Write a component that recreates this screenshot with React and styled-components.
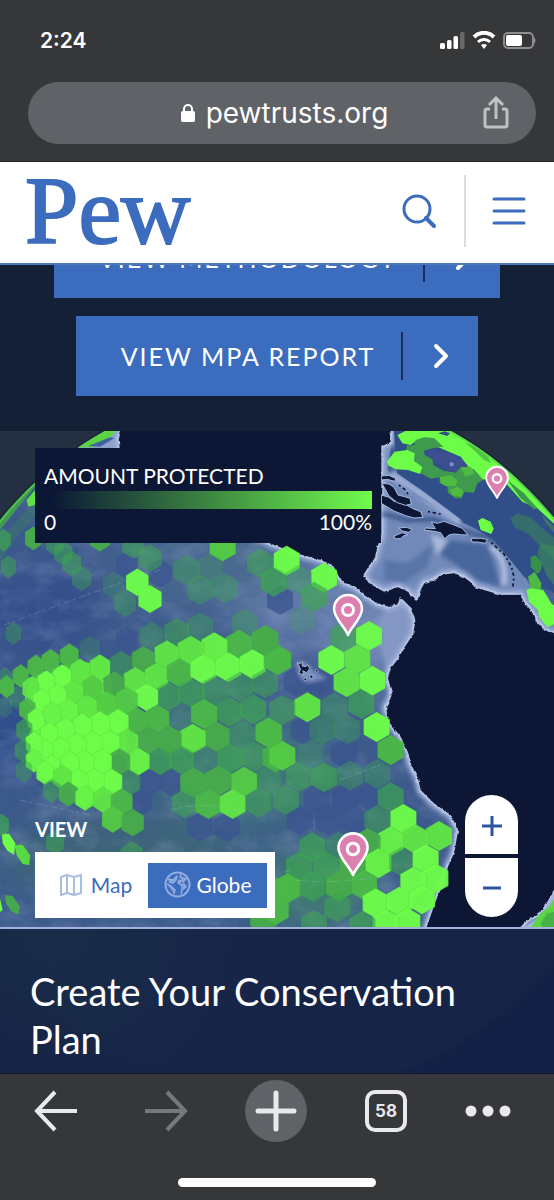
import React, { useState } from "react"
import styled, { createGlobalStyle } from "styled-components"

const GlobalStyle = createGlobalStyle`
  *, *::before, *::after {
    box-sizing: border-box;
  }
  body {
    margin: 0;
    background: #363739;
    font-family: Lato, "Open Sans", sans-serif;
  }
  button, input {
    font-family: inherit;
  }
`

const Page = styled.div`
  display: flex;
  flex-direction: column;
  min-height: 100vh;
`

const BrowserTop = styled.div`
  padding: 28px 18px 17px 28px;
  background: #363739;
  border-bottom: 1px solid #1f2022;
  font-family: Inter, sans-serif;
  color: #fff;
`

const StatusBar = styled.div`
  display: flex;
  align-items: center;
  justify-content: space-between;
  height: 26px;
  margin-bottom: 28px;
  padding-left: 12px;
`

const Time = styled.span`
  font-size: 21px;
  font-weight: 600;
  line-height: 26px;
`

const StatusIcons = styled.div`
  display: flex;
  align-items: center;
`

const AddressBar = styled.div`
  display: grid;
  grid-template-columns: 60px 1fr 60px;
  align-items: center;
  height: 62px;
  padding: 0 10px;
  border-radius: 31px;
  background: #5f6267;
`

const Address = styled.div`
  grid-column: 2;
  display: flex;
  align-items: center;
  justify-content: center;
  gap: 10px;
  padding-left: 4px;
  font-size: 28px;
  line-height: 32px;
`

const IconButton = styled.button`
  display: flex;
  align-items: center;
  justify-content: center;
  padding: 0;
  border: 0;
  background: transparent;
  cursor: pointer;
`

const SiteHeader = styled.header`
  display: flex;
  align-items: center;
  height: 103px;
  padding: 0 28px 3px 25px;
  background: #fff;
  border-bottom: 2px solid #4c78bd;
`

const Logo = styled.a`
  margin-right: auto;
  color: #3c6cbe;
  font-family: "Liberation Serif", serif;
  font-size: 96px;
  line-height: 96px;
  -webkit-text-stroke: 2px #3c6cbe;
  text-decoration: none;
`

const HeaderDivider = styled.div`
  width: 2px;
  height: 72px;
  margin: 0 26px 0 27px;
  background: #dddddf;
`

const Reports = styled.section`
  display: flex;
  flex-direction: column;
  align-items: center;
  justify-content: flex-end;
  gap: 18px;
  height: 166px;
  padding-bottom: 35px;
  overflow: hidden;
  background: #142036;
`

const ReportLink = styled.a`
  display: flex;
  flex: none;
  align-items: center;
  height: 80px;
  padding: 0 25px 0 45px;
  background: #3c6cbe;
  color: #fff;
  font-size: 25px;
  letter-spacing: 2px;
  text-decoration: none;
`

const LinkDivider = styled.span`
  width: 2px;
  height: 48px;
  margin: 0 25px 0 26px;
  background: #1b2d58;
`

const MapArea = styled.section`
  position: relative;
  aspect-ratio: 554 / 496;
  overflow: hidden;
  background: #243042;
`

const GlobeSvg = styled.svg`
  display: block;
  width: 100%;
  height: 100%;
`

const Legend = styled.div`
  position: absolute;
  top: 17px;
  left: 35px;
  width: 346px;
  padding: 15px 9px 8px;
  background: #0b1735;
  color: #fff;
  font-size: 21px;
  line-height: 26px;
`

const LegendBar = styled.div`
  height: 18px;
  margin-top: 2px;
  background: linear-gradient(90deg, #0b1735 2%, #70fb4c);
`

const LegendRange = styled.div`
  display: flex;
  justify-content: space-between;
`

const ViewSwitch = styled.div`
  position: absolute;
  left: 35px;
  bottom: 9px;
`

const ViewLabel = styled.div`
  margin-bottom: 11px;
  color: #fff;
  font-size: 20px;
  font-weight: 700;
  line-height: 24px;
`

const ViewOptions = styled.div`
  display: flex;
  padding: 11px 8px 10px;
  background: #fff;
`

const ViewOption = styled.button`
  display: flex;
  align-items: center;
  justify-content: center;
  gap: ${(props) => (props.$wide ? "6px" : "8px")};
  width: ${(props) => (props.$wide ? "119px" : "105px")};
  height: 45px;
  padding: 0 0 2px;
  border: 0;
  background: ${(props) => (props.$active ? "#3c6cbe" : "transparent")};
  color: ${(props) => (props.$active ? "#fff" : "#3c6cbe")};
  font-size: 21px;
  cursor: pointer;
`

const ZoomControl = styled.div`
  position: absolute;
  right: 36px;
  bottom: 10px;
  display: flex;
  flex-direction: column;
  gap: 4px;
`

const ZoomButton = styled(IconButton)`
  width: 53px;
  height: 59px;
  background: #fff;
  border-radius: ${(props) => (props.$top ? "27px 27px 0 0" : "0 0 27px 27px")};
`

const PlanPanel = styled.section`
  height: 147px;
  padding: 38px 30px 0;
  border-top: 2px solid #a3b2dc;
  border-bottom: 1px solid #10182f;
  background:
    radial-gradient(circle at 10% 0, #1a2c48 0, transparent 45%),
    radial-gradient(circle 355px at 278px -186px, #162448 98%, #142046 100%);
`

const PlanTitle = styled.h2`
  margin: 0;
  color: #fff;
  font-size: 38px;
  font-weight: 400;
  line-height: 48px;
`

const BrowserBottom = styled.div`
  display: flex;
  flex-direction: column;
  align-items: center;
  background: #363739;
`

const Toolbar = styled.nav`
  display: flex;
  align-items: center;
  justify-content: space-between;
  width: 100%;
  height: 74px;
  padding: 0 43px 0 25px;
`

const ToolButton = styled(IconButton)`
  width: ${(props) => (props.$narrow ? "46px" : "62px")};
  height: 62px;
  border-radius: 50%;
  background: ${(props) => (props.$filled ? "#5f6267" : "transparent")};
`

const TabCount = styled.span`
  display: flex;
  align-items: center;
  justify-content: center;
  width: 42px;
  height: 42px;
  border: 4px solid #e8e9ec;
  border-radius: 10px;
  color: #e8e9ec;
  font-family: Inter, sans-serif;
  font-size: 17px;
  font-weight: 700;
`

const HomeIndicator = styled.div`
  width: 198px;
  height: 9px;
  margin: 30px 0 13px;
  border-radius: 5px;
  background: #fff;
`

// [x, y, level] with level going from 0 (unprotected) to 10
const WEST_CELLS = [
  [412, 457, 10], [450, 507, 10], [668, 349, 7], [530, 607, 3], [600, 592, 2], [455, 617, 2],
  [560, 420, 2], [630, 415, 1], [600, 480, 2], [675, 475, 2], [780, 400, 3], [820, 455, 3],
  [215, 400, 3], [245, 445, 2], [190, 370, 3], [100, 325, 5], [375, 520, 2], [450, 385, 3],
  [400, 345, 3], [300, 325, 5], [165, 340, 3], [25, 410, 3], [10, 330, 4], [735, 580, 2],
  [270, 655, 1], [340, 465, 1], [40, 610, 2], [15, 745, 2], [50, 802, 2], [15, 830, 1],
  [792, 637, 5], [717, 644, 6], [643, 652, 9], [572, 662, 8], [500, 674, 8], [430, 690, 5],
  [363, 703, 3], [208, 678, 6], [152, 694, 6], [108, 710, 6], [62, 738, 6], [20, 770, 6],
  [300, 712, 8], [240, 724, 8], [186, 740, 10], [138, 757, 10], [92, 775, 8],
  [405, 752, 8], [470, 740, 8], [538, 728, 6], [610, 718, 10], [685, 712, 10], [758, 703, 10],
  [342, 764, 5], [277, 775, 7], [222, 787, 8], [172, 798, 10], [124, 812, 10], [82, 838, 6],
  [830, 690, 4], [795, 760, 3], [720, 770, 3], [645, 780, 3], [575, 790, 4], [505, 798, 4],
  [440, 802, 10], [380, 812, 7], [320, 822, 7], [262, 832, 8], [206, 842, 9], [157, 852, 9],
  [108, 870, 10], [73, 900, 4],
  [760, 838, 4], [688, 845, 4], [612, 852, 6], [540, 860, 1], [472, 866, 6], [410, 873, 6],
  [354, 877, 10], [300, 882, 10], [247, 888, 10], [196, 900, 10], [147, 912, 10],
  [805, 907, 6], [727, 915, 2], [650, 920, 5], [578, 926, 8], [508, 930, 5], [442, 932, 5],
  [382, 936, 8], [328, 940, 10], [278, 942, 10], [230, 946, 10], [182, 958, 10], [135, 965, 10],
  [102, 940, 10], [68, 962, 3], [102, 992, 9],
  [827, 982, 6], [765, 980, 3], [690, 985, 4], [615, 990, 1], [545, 990, 4], [480, 993, 4],
  [415, 995, 9], [358, 995, 5], [305, 996, 10], [253, 998, 10], [210, 1000, 10], [155, 1010, 10],
  [72, 1022, 2], [135, 1028, 10],
  [805, 1050, 2], [732, 1055, 7], [655, 1052, 5], [580, 1058, 5], [388, 1058, 3], [335, 1056, 10],
  [283, 1054, 10], [236, 1056, 10], [187, 1042, 8], [155, 1082, 3], [205, 1092, 5],
  [255, 1104, 9], [310, 1110, 8], [365, 1116, 6], [553, 1120, 3], [625, 1122, 6], [698, 1122, 8],
  [775, 1118, 3], [338, 1168, 7], [398, 1178, 5], [5, 1185, 4], [165, 1238, 3], [395, 1275, 3],
  [825, 1385, 5], [790, 1465, 5],
]

const EAST_CELLS = [
  [38, 392, 10], [150, 443, 10], [120, 500, 4], [75, 450, 2], [0, 455, 2], [85, 570, 1],
  [208, 620, 4], [285, 618, 10], [172, 690, 10], [250, 688, 8], [12, 690, 6], [-26, 630, 5],
  [295, 752, 10], [218, 757, 8], [100, 832, 8], [262, 822, 4], [182, 832, 2], [25, 840, 3],
  [308, 891, 10], [350, 960, 6], [145, 900, 2], [220, 898, 2], [25, 977, 7], [-15, 910, 6],
  [110, 972, 1], [75, 1040, 3], [150, 1042, 4], [228, 1037, 2], [310, 1032, 2], [35, 1110, 3],
  [350, 1102, 4], [388, 1167, 10], [310, 1170, 3], [495, 1218, 8], [425, 1228, 8], [350, 1234, 9],
  [280, 1240, 5], [115, 1252, 4], [195, 1250, 2], [75, 1310, 4], [155, 1310, 4], [235, 1305, 5],
  [313, 1300, 9], [384, 1295, 3], [455, 1287, 10], [484, 1345, 10], [418, 1355, 10], [270, 1365, 6],
  [195, 1368, 5], [40, 1375, 6], [115, 1370, 4], [305, 1420, 10], [376, 1415, 10], [444, 1408, 10],
  [400, 1478, 10], [335, 1482, 10], [5, 1440, 6], [190, 1432, 3], [265, 1488, 4], [120, 1485, 3],
]

// cells that hold open water, darker than the sea around them
const DARK_CELLS = [
  [450, 1055], [515, 1058], [380, 405], [480, 430], [912, 900], [1032, 970], [420, 1120],
  [950, 1105], [1035, 1105], [1110, 1100], [900, 1170], [985, 1170], [1065, 1170],
  [890, 755], [960, 755], [80, 480], [130, 520], [840, 510], [380, 630], [600, 1190], [680, 1190],
]

const WEST_CLUSTER =
  "M92 742 L138 722 L186 706 L240 692 L272 700 L300 678 L330 694 L330 740 L345 820 L378 850 L380 960 L335 980 L335 1010 L360 1040 L356 1080 L315 1080 L285 1110 L255 1132 L230 1118 L225 1080 L165 1055 L140 1055 L118 1020 L82 995 L85 920 L95 885 L90 860 L100 830 L74 805Z"

const LAND =
  "M-455 -20 L345 -10 L350 35 L322 50 L322 318 L310 350 L302 385 L290 400 L268 435 L285 460 L330 485 L372 472 L402 485 L430 514 L440 480 L452 458 L480 452 L505 434 L540 430 L568 440 L588 455 L602 472 L650 486 L680 495 L738 494 L752 520 L770 540 L790 575 L812 600 L845 615 L845 1370 L825 1405 L810 1430 L790 1452 L760 1470 L730 1500 L455 1500 L476 1440 L490 1400 L510 1360 L522 1310 L540 1270 L553 1200 L530 1155 L480 1120 L440 1080 L432 1045 L410 1000 L400 960 L380 920 L348 880 L336 835 L355 792 L342 745 L350 715 L370 690 L390 655 L418 612 L424 570 L408 530 L378 500 L370 522 L345 530 L308 520 L286 504 L268 490 L240 470 L206 455 L188 425 L176 405 L140 390 L75 372 L0 345 L-80 310 L-460 75 L-466 30 Z"

const SOLID = {
  5: "#48ab4b",
  6: "#4bb848",
  7: "#53cb45",
  8: "#60e545",
  9: "#67f247",
  10: "#6dfd49",
}

const hexPoints = (cx, cy, rx, ry) =>
  [
    [0, -ry],
    [rx, -ry / 2],
    [rx, ry / 2],
    [0, ry],
    [-rx, ry / 2],
    [-rx, -ry / 2],
  ]
    .map(([x, y]) => `${cx + x},${cy + y}`)
    .join(" ")

// the cells get narrower towards the western limb
const cellWidth = (x) => (x < 560 ? 22 + (x / 560) * 16 : 39)
const cellHeight = (x) => (x < 560 ? 34 + (x / 560) * 10 : 45)

const Cell = ({ x, y, level, globalX }) => (
  <polygon
    points={hexPoints(x, y, cellWidth(globalX), cellHeight(globalX))}
    fill={SOLID[level] || "#3da650"}
    fillOpacity={level > 4 ? 0.96 : 0.12 + level * 0.14}
    stroke="#3fae45"
    strokeOpacity={level > 4 ? 0.3 : 0.05}
    strokeWidth="2"
  />
)

const Pin = ({ x, y, scale = 1 }) => (
  <g transform={`translate(${x} ${y}) scale(${scale})`}>
    <path
      d="M0 0 C-3 -8 -14 -17 -14 -26 A14 14 0 0 1 14 -26 C14 -17 3 -8 0 0Z"
      fill="#dc81af"
      stroke="#fff"
      strokeWidth="2.5"
      strokeLinejoin="round"
    />
    <circle cx="0" cy="-25" r="5.5" fill="#dc81af" stroke="#fff" strokeWidth="3" />
  </g>
)

const Globe = () => (
  <GlobeSvg
    viewBox="0 431 554 496"
    preserveAspectRatio="xMidYMid slice"
    role="img"
    aria-label="Globe of protected ocean areas"
  >
    <defs>
      <clipPath id="sphere">
        <circle cx="278" cy="741" r="355" />
      </clipPath>
      <filter id="soft" x="-50%" y="-50%" width="200%" height="200%">
        <feGaussianBlur stdDeviation="18" />
      </filter>
      <filter id="edge" x="-10%" y="-10%" width="120%" height="120%">
        <feGaussianBlur stdDeviation="6" />
      </filter>
      <filter id="coast" x="-5%" y="-5%" width="110%" height="110%">
        <feTurbulence type="fractalNoise" baseFrequency="0.06" numOctaves="3" result="n" />
        <feDisplacementMap in="SourceGraphic" in2="n" scale="10" xChannelSelector="R" yChannelSelector="G" />
      </filter>
      <filter id="relief" x="0" y="0" width="100%" height="100%">
        <feTurbulence type="fractalNoise" baseFrequency="0.03 0.05" numOctaves="5" seed="8" />
        <feColorMatrix values="0 0 0 0 0.55  0 0 0 0 0.65  0 0 0 0 0.85  1.8 0 0 0 -0.75" />
      </filter>
    </defs>
    <circle cx="278" cy="741" r="357" fill="#1b2b33" />
    <g clipPath="url(#sphere)">
      <rect y="420" width="554" height="520" fill="#3d5a8c" />
      <g filter="url(#soft)">
        <ellipse cx="40" cy="610" rx="60" ry="50" fill="#34508c" />
        <ellipse cx="300" cy="600" rx="80" ry="50" fill="#5f78a8" />
        <ellipse cx="390" cy="640" rx="60" ry="40" fill="#7588b8" />
        <ellipse cx="200" cy="565" rx="90" ry="40" fill="#48698f" />
        <ellipse cx="240" cy="770" rx="90" ry="60" fill="#3f6f80" />
        <ellipse cx="120" cy="860" rx="120" ry="40" fill="#3c6578" />
        <ellipse cx="310" cy="890" rx="70" ry="35" fill="#3f7a72" />
        <ellipse cx="480" cy="520" rx="60" ry="35" fill="#2d4a82" />
        <ellipse cx="10" cy="730" rx="20" ry="50" fill="#2c4a8c" />
      </g>
      <rect y="431" width="554" height="496" filter="url(#relief)" opacity="0.22" />
      <g transform="translate(0 430) scale(0.33333)">
        {DARK_CELLS.map(([x, y]) => (
          <polygon
            key={`${x}-${y}`}
            points={hexPoints(x, y, cellWidth(x), cellHeight(x))}
            fill="#3b5490"
            fillOpacity="0.75"
          />
        ))}
        <path d="M0 300 L105 170 L215 75 L225 52 L150 110 L0 265Z" fill="#3f9f4d" opacity="0.9" />
        <path d="M0 330 L60 260 L105 215 L105 260 L70 300 L40 330 L0 400Z" fill="#3a7a68" opacity="0.5" />
        <path d="M210 55 L300 0 L372 0 L358 55Z" fill="#8ea0c9" />
        <path d="M225 52 L300 2 L355 0 L335 18 L280 52Z" fill="#5bd443" />
        <path d="M265 48 L330 22 L345 24 L300 50Z" fill="#41629c" />
        <path d="M80 210 L105 180 L105 225 L85 230Z" fill="#5fe045" />
        <path d="M5 1210 L28 1212 L46 1240 L42 1274 L22 1262 L8 1240Z" fill="#6dfd49" />
        <path d="M44 1246 L68 1244 L90 1275 L88 1305 L68 1302 L50 1275Z" fill="#58d943" />
        <path d="M15 1395 L38 1398 L60 1430 L55 1454 L35 1445 L18 1420Z" fill="#45a84d" />
        <path d="M0 1405 L8 1440 L0 1446Z" fill="#6dfd49" />
        <path d={WEST_CLUSTER} fill="#67f247" />
        {WEST_CELLS.map(([x, y, level]) => (
          <Cell key={`${x}-${y}`} x={x} y={y} globalX={x} level={level} />
        ))}
      </g>
      <g transform="translate(274 430) scale(0.33333)">
        <path
          d="M320 -10 L360 0 L340 120 L420 195 L560 275 L680 330 L740 420 L845 590 L845 640 L700 540 L540 460 L430 530 L260 470 L290 350 L320 320Z"
          fill="#7189b9"
        />
        <g filter="url(#edge)">
          <path d="M490 370 L530 330 L640 345 L660 400 L680 470 L600 450 L540 400Z" fill="#46669c" />
          <path d="M330 390 L400 400 L480 340 L460 410 L390 460 L330 450Z" fill="#5874a8" />
          <path d="M470 310 L520 330 L490 380Z" fill="#c0cbe6" opacity="0.7" />
          <path d="M650 350 Q700 380 690 465" fill="none" stroke="#b9c6e4" strokeWidth="14" />
          <path d="M370 480 L410 510 L440 600 L380 700 L340 720 L300 600 L330 540Z" fill="#8496c4" />
        </g>
        <path d={LAND} fill="none" stroke="#9dafd8" strokeWidth="26" filter="url(#edge)" />
        <path d={LAND} fill="none" stroke="#b4c2e4" strokeWidth="12" filter="url(#coast)" />
        <path d={LAND} fill="#0b1735" filter="url(#coast)" />
        <path
          d="M322 250 L400 270 L480 268 L560 300 L650 325 L720 385"
          fill="none"
          stroke="#2c477c"
          strokeWidth="10"
          filter="url(#edge)"
        />
        <path d="M350 130 L440 190 L560 275" fill="none" stroke="#9dafd8" strokeWidth="26" filter="url(#edge)" />
        <path d="M360 0 L860 0 L860 500 L750 440 L660 330 L570 275 L450 185 L370 130 L366 90Z" fill="#304e87" />
        <g fill="#0b1735" stroke="#a9b9df" strokeWidth="3">
          <path d="M322 195 L345 202 L360 214 L390 220 L415 235 L440 245 L447 262 L420 264 L395 257 L360 243 L322 220Z" />
          <path d="M324 160 L345 162 L360 172 L372 195 L392 200 L408 205 L412 222 L395 226 L370 218 L345 198Z" />
          <path d="M472 276 L490 280 L510 274 L540 285 L565 295 L582 315 L560 314 L540 312 L525 315 L512 326 L500 308 L480 304 L450 300 L455 294 L484 296Z" />
          <path d="M592 325 L620 325 L640 328 L634 340 L610 336 L594 336Z" />
          <path d="M360 318 L385 308 L402 314 L388 318 L380 326 L364 326Z" />
          <path d="M374 294 L398 292 L414 298 L405 307 L385 303Z" />
          <path d="M322 138 L345 136 L366 146 L362 154 L340 148 L322 150Z" />
        </g>
        <path
          d="M375 165 L392 178 L402 192 M462 245 L500 252 M652 338 L690 372 L712 410 L720 440 L716 478"
          fill="none"
          stroke="#0b1735"
          strokeWidth="5"
          strokeDasharray="6 8 10 9"
        />
        <path
          d="M370 15 L400 0 L540 0 L640 68 L720 138 L790 210 L860 285 L860 300 L790 235 L745 215 L700 165 L660 145 L615 150 L590 120 L560 80 L500 55 L430 30 L410 45 L385 40Z"
          fill="#6dfd49"
        />
        <path d="M425 30 L450 22 L480 24 L508 50 L480 54 L450 62 L452 74 L475 88 L478 105 L508 122 L535 126 L560 108 L600 118 L628 150 L610 160 L600 188 L572 186 L562 205 L545 205 L522 188 L520 170 L497 160 L497 142 L470 146 L440 130 L425 96 L395 62 L400 46 L420 46Z" fill="#3f9a4e" />
        <path d="M497 142 L530 135 L550 152 L545 168 L515 168 L500 158Z M560 112 L590 110 L602 130 L574 140Z M528 180 L550 170 L568 182 L562 200 L535 196Z" fill="#50bb43" />
        <path d="M338 95 L362 65 L400 60 L422 70 L420 92 L445 112 L438 132 L402 120 L365 118 L345 108Z" fill="#6dfd49" />
        <path d="M450 70 L480 60 L500 68 L530 70 L562 88 L580 105 L560 112 L545 128 L515 122 L505 104 L478 100 L476 84Z" fill="#3c4f90" />
        <path d="M492 10 L512 4 L528 10 L520 18Z" fill="#304e87" />
        <circle cx="533" cy="103" r="5" fill="#6d7fc0" stroke="#a9b9df" strokeWidth="2" />
        <path d="M575 38 L600 46 L640 78 L652 100 L630 90 L606 66Z" fill="#4fc244" />
        <path d="M700 150 L750 190 L790 235 L780 238 L740 205Z" fill="#3b9a48" />
        <path d="M710 265 L730 250 L775 265 L800 290 L850 330 L850 400 L800 350 L760 310 L720 290Z" fill="#3c8d56" opacity="0.5" />
        <path d="M800 250 L860 310 L860 330 L815 280Z" fill="#3c8d56" opacity="0.6" />
        <path d="M770 380 L785 376 L805 400 L800 422 L790 432 L770 410Z" fill="#379148" />
        <path d="M762 440 L782 425 L802 460 L800 482 L770 475Z" fill="#4fb845" />
        <path d="M757 480 L770 475 L808 480 L832 520 L845 530 L845 580 L820 592 L795 560 L792 540 L765 515Z" fill="#6dfd49" />
        <path d="M612 272 L625 264 L650 275 L659 296 L652 312 L620 300Z" fill="#6dfd49" />
        <path d="M800 340 L845 350 L845 470 L820 440 L790 370Z" fill="#3c8d56" opacity="0.6" />
        <path d="M740 1500 L800 1458 L845 1380 L845 1500Z" fill="#a4b4dc" />
        <path d="M765 1500 L795 1455 L825 1430 L845 1400 L845 1500Z" fill="#5ad543" />
        <path d="M800 1480 L820 1450 L845 1445 L845 1500 L810 1500Z" fill="#429f48" opacity="0.7" />
        <path d="M65 695 Q100 690 115 720 L160 745 L100 760 L75 740Z" fill="#a9b9df" opacity="0.6" filter="url(#edge)" />
        <g fill="#0b1735" stroke="#c9d5ef" strokeWidth="2">
          <path d="M70 698 L78 702 L86 696 L84 708 L96 710 L100 704 L107 716 L98 728 L86 722 L90 734 L74 730 L80 718Z" />
          <circle cx="112" cy="740" r="5" />
          <circle cx="128" cy="722" r="4" />
          <circle cx="94" cy="748" r="4" />
        </g>
        {EAST_CELLS.map(([x, y, level]) => (
          <Cell key={`${x}-${y}`} x={x} y={y} globalX={x + 822} level={level} />
        ))}
      </g>
      <path
        d="M4 625 L100 590 L160 570 M20 800 L90 815 M170 810 Q210 800 240 812 M296 880 Q330 884 372 878 M240 890 L290 870 M340 780 L380 765"
        fill="none"
        stroke="#b6cbdc"
        strokeOpacity="0.25"
        strokeDasharray="7 2 3 4"
      />
    </g>
    <circle cx="278" cy="741" r="354" fill="none" stroke="#58d447" strokeOpacity="0.7" strokeWidth="2" />
    <Pin x={497} y={498} scale={0.78} />
    <Pin x={348} y={635} />
    <Pin x={353} y={875} scale={1.04} />
  </GlobeSvg>
)

const Chevron = () => (
  <svg width="25" height="28" viewBox="0 0 25 28" fill="none">
    <path d="M8 4 L18 14 L8 24" stroke="#fff" strokeWidth="4" strokeLinecap="round" strokeLinejoin="round" />
  </svg>
)

const SignalIcons = () => (
  <svg width="97" height="20" viewBox="0 0 97 20" fill="#fff">
    <rect x="1" y="12" width="5" height="6" rx="1.5" />
    <rect x="8" y="9" width="4.5" height="9" rx="1.5" />
    <rect x="14.5" y="5" width="4.5" height="13" rx="1.5" />
    <rect x="21" y="1" width="4.5" height="17" rx="1.5" fillOpacity="0.25" />
    <g fill="none" stroke="#fff" strokeWidth="3">
      <path d="M35 6 A14 14 0 0 1 55 6" strokeWidth="4" />
      <path d="M39 11 A8.5 8.5 0 0 1 51 11" />
    </g>
    <path d="M42 14 Q45 12 48 14 L45 18Z" />
    <rect x="65" y="2" width="29" height="15" rx="4" fill="none" stroke="#8d8e90" strokeWidth="2" />
    <rect x="67" y="4" width="16" height="11" rx="2" />
    <path d="M95 6 Q98 9.5 95 13Z" fill="#8d8e90" />
  </svg>
)

const Arrow = ({ forward }) => (
  <svg width="44" height="42" viewBox="0 0 44 42" fill="none">
    <path
      d={forward ? "M1 21 H40 M23 2 L41 21 L23 40" : "M43 21 H4 M21 2 L3 21 L21 40"}
      stroke={forward ? "#77787b" : "#e8e9ec"}
      strokeWidth="4"
    />
  </svg>
)

const MapIcon = () => (
  <svg width="24" height="24" viewBox="0 0 24 24" fill="none" stroke="#aabcdf" strokeWidth="2" strokeLinejoin="round">
    <path d="M2 4 L8 2 L15 4 L22 2 V20 L15 22 L8 20 L2 22Z M8 2 V20 M15 4 V22" />
  </svg>
)

const GlobeIcon = () => (
  <svg width="27" height="27" viewBox="0 0 27 27">
    <circle cx="13.5" cy="13.5" r="12" fill="none" stroke="#93ade0" strokeWidth="2" />
    <path
      d="M4 8 L9 9 L13 5 L12 9 L9 12 L5 11 M17 3 L16 6 L22 8 L19 11 L15 9 L14 12 L17 14 L20 13 L22 16 L18 19 L17 23 M3 13 L7 15 L11 19 L10 23"
      fill="#93ade0"
      fillOpacity="0.75"
      stroke="#93ade0"
      strokeWidth="1.5"
      strokeLinejoin="round"
    />
  </svg>
)

const App = () => {
  const [view, setView] = useState("globe")

  return (
    <>
      <GlobalStyle />
      <Page>
        <BrowserTop>
          <StatusBar>
            <Time>2:24</Time>
            <StatusIcons>
              <SignalIcons />
            </StatusIcons>
          </StatusBar>
          <AddressBar>
            <Address>
              <svg width="16" height="20" viewBox="0 0 16 20">
                <path d="M4 9 V6 A4 4 0 0 1 12 6 V9" fill="none" stroke="#fff" strokeWidth="2" />
                <rect x="1" y="8" width="14" height="11" rx="2" fill="#fff" />
              </svg>
              pewtrusts.org
            </Address>
            <IconButton aria-label="Share">
              <svg width="26" height="34" viewBox="0 0 26 34" fill="none" stroke="#bfc1c4" strokeWidth="3">
                <path d="M7 13 H4 Q2 13 2 15 V29 Q2 31 4 31 H22 Q24 31 24 29 V15 Q24 13 22 13 H19" />
                <path d="M13 23 V3 M6 9 L13 2 L20 9" />
              </svg>
            </IconButton>
          </AddressBar>
        </BrowserTop>

        <SiteHeader>
          <Logo href="#">Pew</Logo>
          <IconButton aria-label="Search">
            <svg width="36" height="36" viewBox="0 0 36 36" fill="none" stroke="#3c6cbe" strokeWidth="3">
              <circle cx="16" cy="16" r="13" />
              <path d="M25 25 L33 33" strokeWidth="4" strokeLinecap="round" />
            </svg>
          </IconButton>
          <HeaderDivider />
          <IconButton aria-label="Menu">
            <svg width="34" height="30" viewBox="0 0 34 30" stroke="#3c6cbe" strokeWidth="3" strokeLinecap="round">
              <path d="M2 3 H32 M2 15 H32 M2 27 H32" />
            </svg>
          </IconButton>
        </SiteHeader>

        <Reports>
          <ReportLink href="#">
            VIEW METHODOLOGY
            <LinkDivider />
            <Chevron />
          </ReportLink>
          <ReportLink href="#">
            VIEW MPA REPORT
            <LinkDivider />
            <Chevron />
          </ReportLink>
        </Reports>

        <MapArea>
          <Globe />
          <Legend>
            <div>AMOUNT PROTECTED</div>
            <LegendBar />
            <LegendRange>
              <span>0</span>
              <span>100%</span>
            </LegendRange>
          </Legend>
          <ViewSwitch>
            <ViewLabel>VIEW</ViewLabel>
            <ViewOptions>
              <ViewOption $active={view === "map"} onClick={() => setView("map")}>
                <MapIcon />
                Map
              </ViewOption>
              <ViewOption $wide $active={view === "globe"} onClick={() => setView("globe")}>
                <GlobeIcon />
                Globe
              </ViewOption>
            </ViewOptions>
          </ViewSwitch>
          <ZoomControl>
            <ZoomButton $top aria-label="Zoom in">
              <svg width="22" height="22" viewBox="0 0 22 22" stroke="#2b559f" strokeWidth="3">
                <path d="M1 12 H21 M11 2 V22" />
              </svg>
            </ZoomButton>
            <ZoomButton aria-label="Zoom out">
              <svg width="22" height="22" viewBox="0 0 22 22" stroke="#2b559f" strokeWidth="3">
                <path d="M2 11 H20" />
              </svg>
            </ZoomButton>
          </ZoomControl>
        </MapArea>

        <PlanPanel>
          <PlanTitle>Create Your Conservation Plan</PlanTitle>
        </PlanPanel>

        <BrowserBottom>
          <Toolbar>
            <ToolButton aria-label="Back">
              <Arrow />
            </ToolButton>
            <ToolButton aria-label="Forward">
              <Arrow forward />
            </ToolButton>
            <ToolButton $filled aria-label="New tab">
              <svg width="42" height="42" viewBox="0 0 42 42" stroke="#e8e9ec" strokeWidth="5" strokeLinecap="round">
                <path d="M3 21 H39 M21 3 V39" />
              </svg>
            </ToolButton>
            <ToolButton aria-label="Open tabs">
              <TabCount>58</TabCount>
            </ToolButton>
            <ToolButton $narrow aria-label="More">
              <svg width="46" height="12" viewBox="0 0 46 12" fill="#e8e9ec">
                <circle cx="6" cy="6" r="5.5" />
                <circle cx="23" cy="6" r="5.5" />
                <circle cx="40" cy="6" r="5.5" />
              </svg>
            </ToolButton>
          </Toolbar>
          <HomeIndicator />
        </BrowserBottom>
      </Page>
    </>
  )
}

export default App
